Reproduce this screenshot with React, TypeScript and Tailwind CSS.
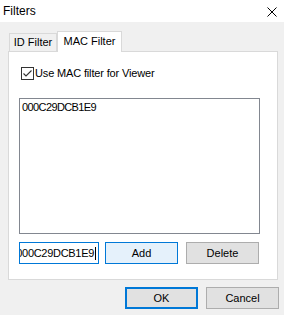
import React from "react";

export default function App() {
  const ui = { fontFamily: '"Liberation Sans", Arial, sans-serif' };
  return (
    <div className="w-[284px] h-[315px] bg-[#f0f0f0] flex flex-col overflow-hidden text-black" style={ui}>
      {/* title bar */}
      <div className="h-[22px] bg-white flex items-center justify-between pl-[3px] pr-[7px] shrink-0">
        <span className="text-[12px] leading-none text-black">Filters</span>
        <svg width="10" height="10" viewBox="0 0 10 10" className="mt-[1px]">
          <path d="M0.5 0.5 L9.5 9.5 M9.5 0.5 L0.5 9.5" stroke="#000" strokeWidth="1" fill="none" />
        </svg>
      </div>

      {/* body */}
      <div className="flex flex-col pl-[8px] pr-[6px] pt-[9px]">
        {/* tabs */}
        <div className="flex items-end h-[20px] pl-[1px] relative z-10">
          <div className="h-[18px] w-[48px] border border-b-0 border-[#d9d9d9] bg-[#f0f0f0] flex items-center justify-center text-[11px] leading-none">
            ID Filter
          </div>
          <div className="h-[21px] w-[65px] -mb-px border border-b-0 border-[#d9d9d9] bg-white flex items-center justify-center text-[11px] leading-none pb-[2px]">
            MAC Filter
          </div>
        </div>
        {/* panel */}
        <div className="h-[229px] border border-[#d9d9d9] bg-white flex flex-col pl-[10px] pt-[15px]">
          <div className="flex items-center h-[13px] ml-[2px]">
            <div className="w-[13px] h-[13px] border border-[#333333] bg-white flex items-center justify-center">
              <svg width="11" height="11" viewBox="0 0 11 11">
                <path d="M1.5 5.5 L4 8 L9.5 2.5" stroke="#333333" strokeWidth="1.1" fill="none" />
              </svg>
            </div>
            <span className="ml-[1px] text-[11px] leading-none tracking-[-0.15px]">Use MAC filter for Viewer</span>
          </div>
          <div className="mt-[18px] w-[241px] h-[136px] border border-[#828790] bg-white pl-[2px] pt-[2px]">
            <div className="text-[11px] leading-[13px] tracking-[-0.6px]">000C29DCB1E9</div>
          </div>
          <div className="mt-[8px] flex items-center h-[22px]">
            <div className="w-[80px] h-[22px] border border-[#0078d7] bg-white flex items-center justify-end overflow-hidden pr-[2px]">
              <span className="text-[11px] leading-none whitespace-nowrap tracking-[-0.3px]">000C29DCB1E9</span>
              <span className="w-px h-[13px] bg-black shrink-0 ml-[1px]" />
            </div>
            <div className="ml-[6px] w-[73px] h-[22px] border border-[#0078d7] bg-[#e5f1fb] flex items-center justify-center text-[11px] leading-none">
              Add
            </div>
            <div className="ml-[8px] w-[73px] h-[22px] border border-[#adadad] bg-[#e1e1e1] flex items-center justify-center text-[11px] leading-none">
              Delete
            </div>
          </div>
        </div>
        {/* bottom buttons */}
        <div className="flex justify-end mt-[7px] -mr-[1px]">
          <div className="w-[73px] h-[22px] border-2 border-[#0078d7] bg-[#e1e1e1] flex items-center justify-center text-[11px] leading-none">
            OK
          </div>
          <div className="ml-[8px] w-[73px] h-[22px] border border-[#adadad] bg-[#e1e1e1] flex items-center justify-center text-[11px] leading-none">
            Cancel
          </div>
        </div>
      </div>
    </div>
  );
}
